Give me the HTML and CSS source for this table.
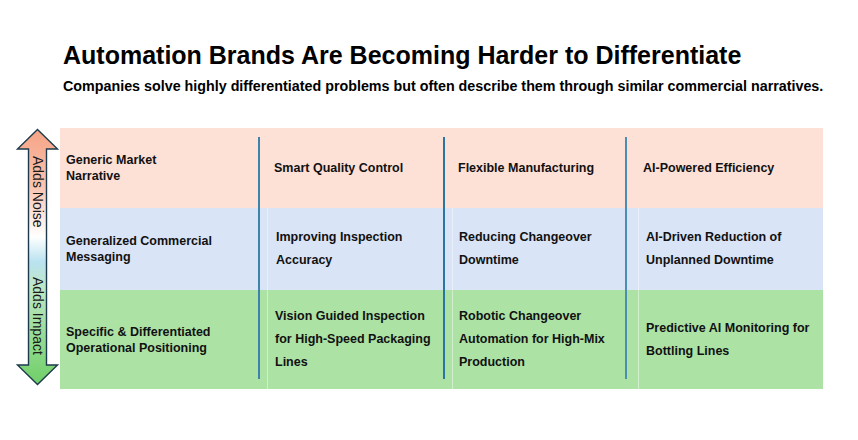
FILE: index.html
```html
<!DOCTYPE html>
<html lang="en">
<head>
<meta charset="utf-8">
<title>Automation Brands</title>
<link rel="stylesheet" href="styles.css">
</head>
<body>
<header class="head">
  <h1 class="title">Automation Brands Are Becoming Harder to Differentiate</h1>
  <p class="subtitle">Companies solve highly differentiated problems but often describe them through similar commercial narratives.</p>
</header>
<main class="chart">
  <div class="axis">
    <svg class="arrow" width="60" height="262" viewBox="0 0 60 262">
      <defs>
        <linearGradient id="ag" x1="0" y1="0" x2="0" y2="1">
          <stop offset="0" stop-color="#f6a385"/>
          <stop offset="0.22" stop-color="#f9c4b0"/>
          <stop offset="0.42" stop-color="#ffffff"/>
          <stop offset="0.52" stop-color="#b9e2f0"/>
          <stop offset="0.62" stop-color="#bfe8c6"/>
          <stop offset="1" stop-color="#6fcf66"/>
        </linearGradient>
      </defs>
      <path d="M37.5 1.5 L57.5 21 L46.5 21 L46.5 237 L57.5 237 L37.5 256.5 L17.5 237 L28.5 237 L28.5 21 L17.5 21 Z" fill="url(#ag)" stroke="#1d3a4c" stroke-width="1.4" stroke-linejoin="miter"/>
      <text class="axis-label" transform="translate(32.5,28) rotate(90)">Adds Noise</text>
      <text class="axis-label" transform="translate(32.5,149) rotate(90)">Adds Impact</text>
    </svg>
  </div>
  <div class="grid">
    <div class="band pink"></div>
    <div class="band blue"></div>
    <div class="band green"></div>

    <div class="vline l1"></div>
    <div class="vline l2"></div>
    <div class="vline l3"></div>

    <div class="cell c0 r1">Generic Market<br>Narrative</div>
    <div class="cell c1 r1 tall">Smart Quality Control</div>
    <div class="cell c2 r1 tall">Flexible Manufacturing</div>
    <div class="cell c3 r1 tall">AI-Powered Efficiency</div>

    <div class="cell c0 r2">Generalized Commercial<br>Messaging</div>
    <div class="cell c1 r2 tall edge">Improving Inspection<br>Accuracy</div>
    <div class="cell c2 r2 tall edge">Reducing Changeover<br>Downtime</div>
    <div class="cell c3 r2 tall edge">AI-Driven Reduction of<br>Unplanned Downtime</div>

    <div class="cell c0 r3">Specific &amp; Differentiated<br>Operational Positioning</div>
    <div class="cell c1 r3 tall edge">Vision Guided Inspection<br>for High-Speed Packaging<br>Lines</div>
    <div class="cell c2 r3 tall edge">Robotic Changeover<br>Automation for High-Mix<br>Production</div>
    <div class="cell c3 r3 tall edge">Predictive AI Monitoring for<br>Bottling Lines</div>
  </div>
</main>
</body>
</html>
```

FILE: styles.css
```css
html, body {
  margin: 0;
  padding: 0;
  background: #ffffff;
}
body {
  font-family: "Liberation Sans", Arial, sans-serif;
  color: #111111;
  width: 858px;
  height: 440px;
  overflow: hidden;
}
.head {
  padding: 41px 0 0 63px;
}
.title {
  margin: 0;
  font-size: 25px;
  line-height: 29px;
  font-weight: bold;
  color: #000;
}
.subtitle {
  margin: 7px 0 0;
  font-size: 14.3px;
  line-height: 18px;
  font-weight: bold;
  color: #000;
}
.chart {
  display: flex;
  margin-top: 33px;
}
.axis {
  width: 60px;
  flex: none;
}
.arrow {
  display: block;
}
.axis-label {
  font-family: "Liberation Sans", Arial, sans-serif;
  font-size: 14px;
  fill: #1a1a1a;
}
.grid {
  display: grid;
  grid-template-columns: 198px 2px 183px 2px 180px 2px 196px;
  grid-template-rows: 80px 82px 99px;
}
.band {
  grid-column: 1 / -1;
}
.band.pink { grid-row: 1; background: #fde0d6; }
.band.blue { grid-row: 2; background: #d9e4f6; }
.band.green { grid-row: 3; background: #ade2a5; }

.vline {
  grid-row: 1 / -1;
  margin: 9px 0 10px;
  background: #3c84ab;
}
.l1 { grid-column: 2; }
.l2 { grid-column: 4; background: #2a76a2; }
.l3 { grid-column: 6; background: #4a8fb3; }

.cell {
  display: flex;
  align-items: center;
  font-size: 12.5px;
  font-weight: bold;
  line-height: 16px;
  color: #111;
}
.cell.tall {
  line-height: 23px;
}
.r1 { grid-row: 1; }
.r2 { grid-row: 2; }
.r3 { grid-row: 3; }
.c0 { grid-column: 1; padding-left: 6px; }
.c1 { grid-column: 3; padding-left: 14px; }
.c2 { grid-column: 5; padding-left: 13px; }
.c3 { grid-column: 7; padding-left: 16px; }

.edge {
  border-left: 1px solid rgba(255, 255, 255, 0.45);
}
.c1.edge { margin-left: 7px; padding-left: 8px; }
.c1.r3 { margin-left: 7px; padding-left: 7px; }
.c2.edge { margin-left: 7px; padding-left: 6px; }
.c3.edge { margin-left: 11px; padding-left: 7px; }
```
